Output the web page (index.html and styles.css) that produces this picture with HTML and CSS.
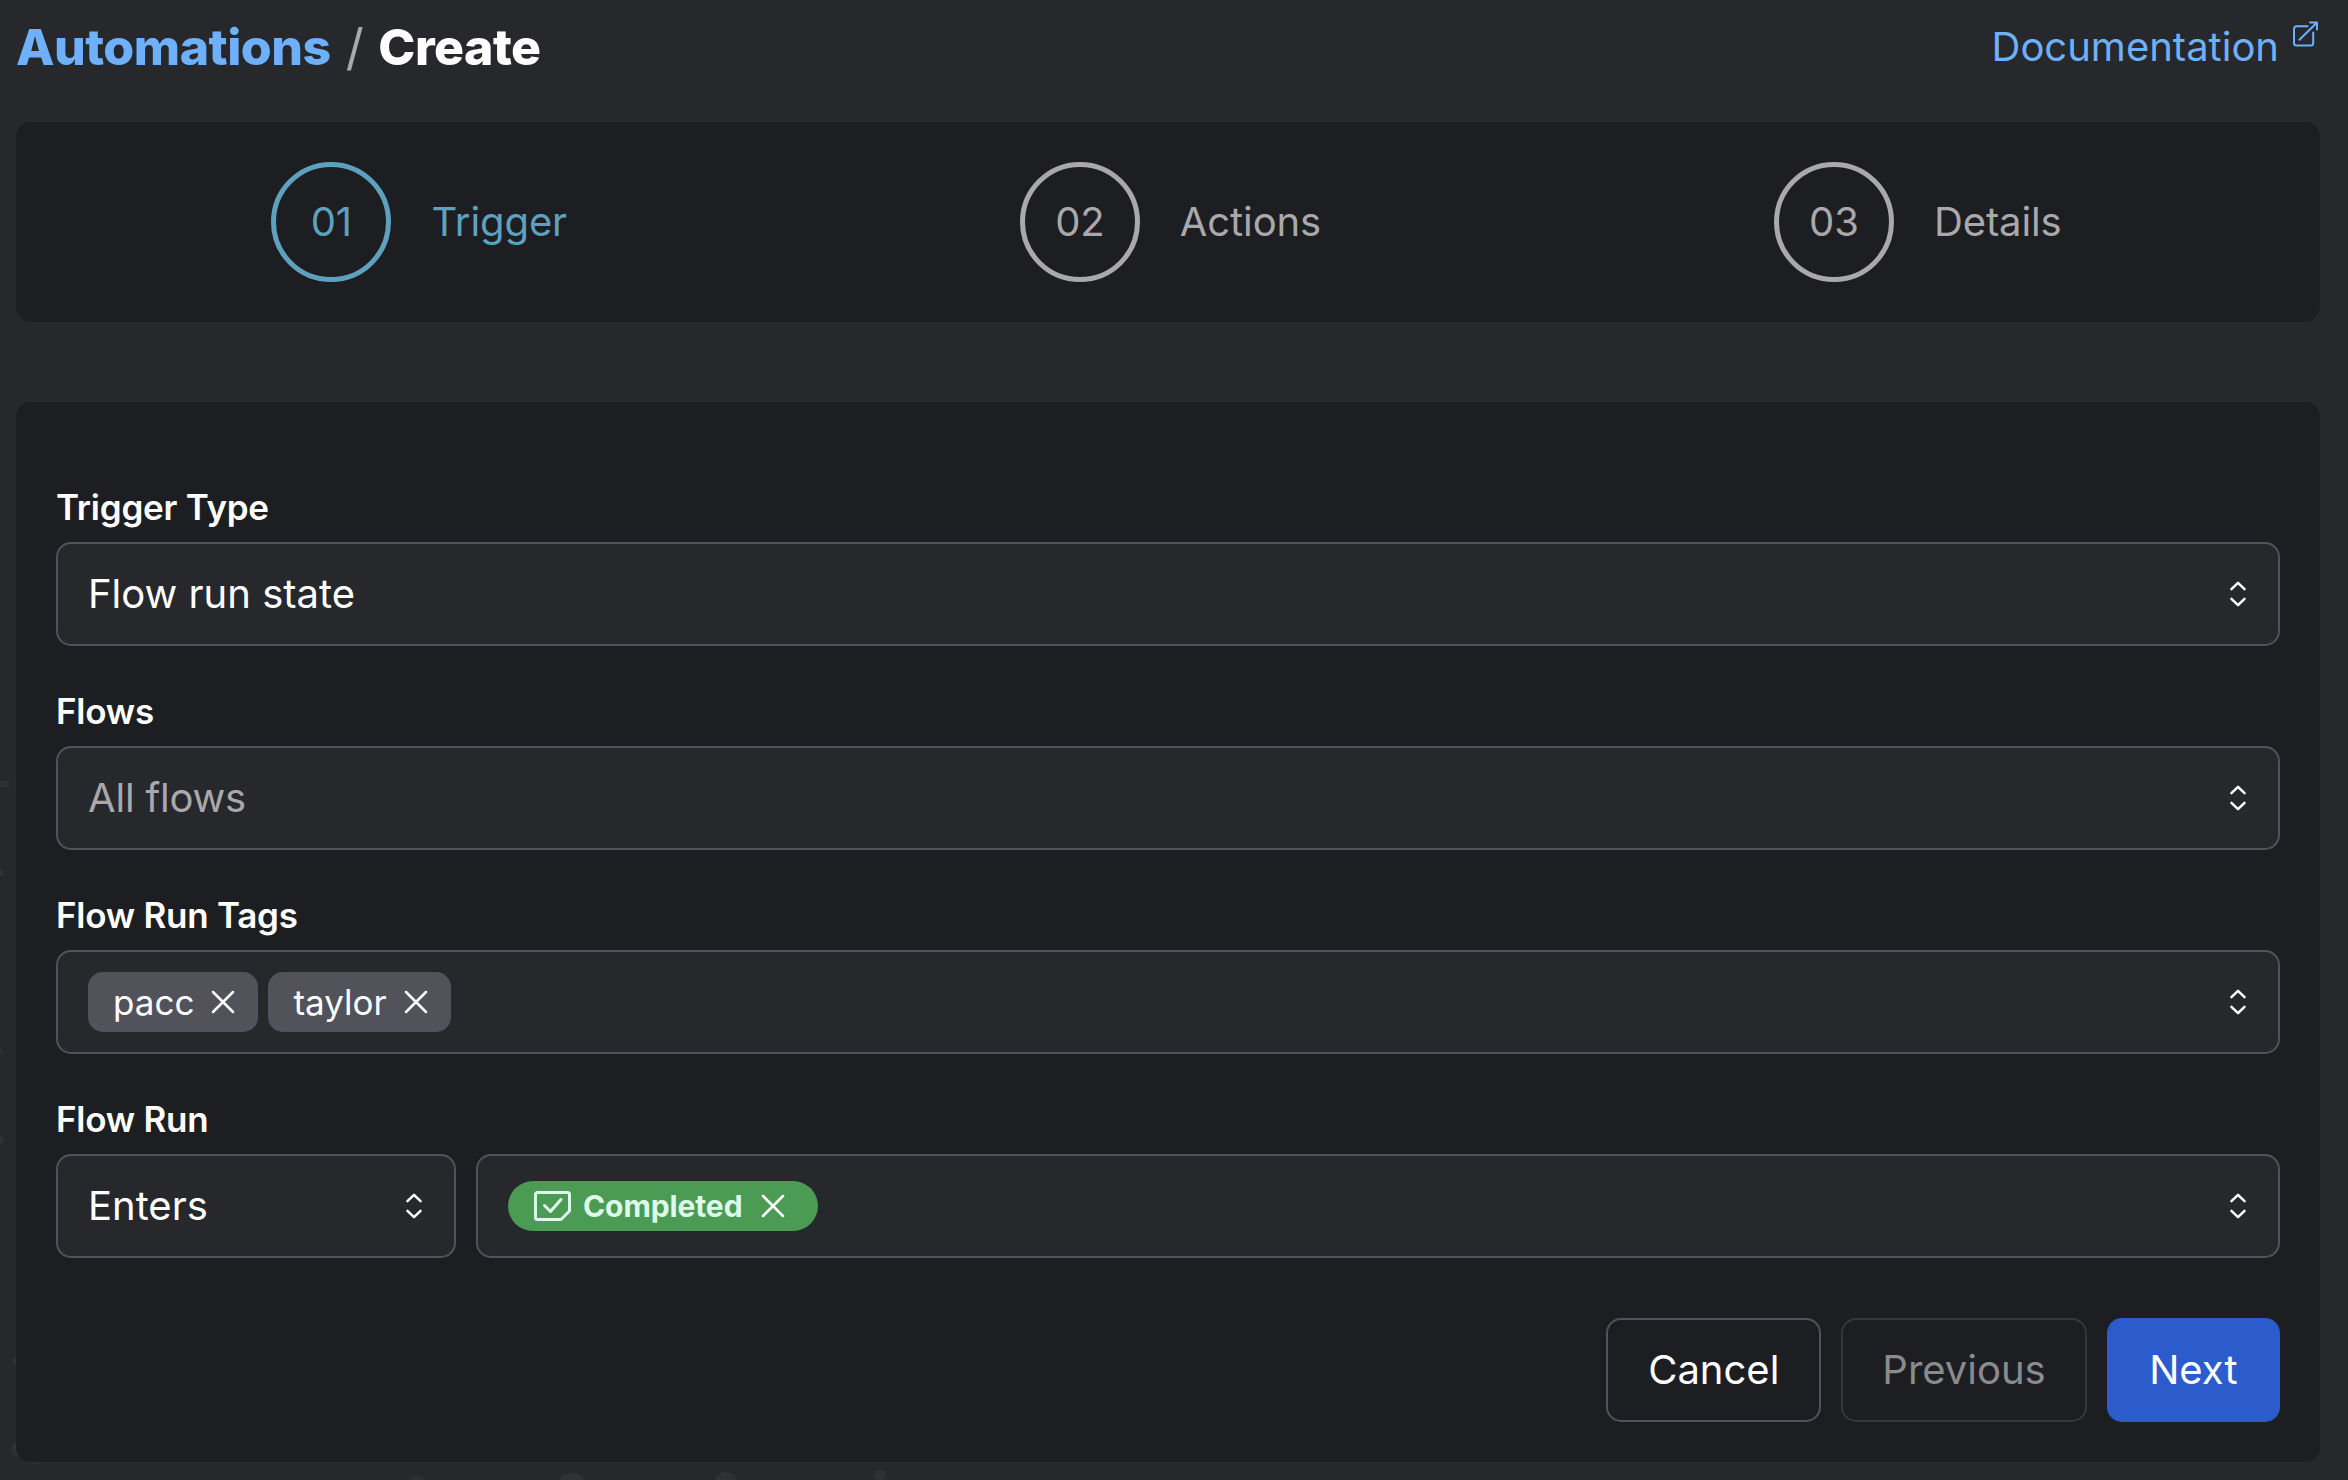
FILE: index.html
```html
<!DOCTYPE html>
<html lang="en">
<head>
<meta charset="utf-8">
<title>Automations / Create</title>
<link rel="stylesheet" href="styles.css">
</head>
<body>
<svg class="backdrop" viewBox="0 0 2348 1480" aria-hidden="true">
  <ellipse cx="4" cy="784" rx="5.5" ry="3.5"/><circle cx="0" cy="873" r="3.5"/><circle cx="-1" cy="1051" r="3"/><circle cx="-1" cy="1140" r="5"/>
  <circle cx="17" cy="1361" r="4"/><circle cx="18" cy="1449" r="7"/><circle cx="35" cy="1457" r="7"/>
  <circle cx="417" cy="1486" r="10"/><circle cx="572" cy="1489" r="16"/><circle cx="726" cy="1483" r="11"/><circle cx="880" cy="1475" r="5.5"/>
</svg>
<svg class="sprite" aria-hidden="true">
  <symbol id="updown" viewBox="0 0 16 26"><path d="M1.5 8.2 8 1.8l6.500 6.400M1.500 17.800 8 24.200l6.500-6.400"/></symbol>
  <symbol id="close" viewBox="0 0 24 24"><path d="M2 2l20 20M22 2 2 22"/></symbol>
</svg>
<main class="page">
  <header class="header">
    <nav class="crumbs"><a class="crumb-link">Automations</a><span class="slash">/</span><span>Create</span></nav>
    <a class="docs">Documentation
      <svg class="external" viewBox="0 0 26 26"><path d="M15.500 5.300H4.500A2.500 2.500 0 0 0 2 7.800V22a2.500 2.500 0 0 0 2.500 2.500h14.200a2.500 2.500 0 0 0 2.500-2.500V11.500M7.500 18.800 25 1.500M18 1.500h7v7"/></svg>
    </a>
  </header>

  <section class="card steps">
    <div class="step active"><span class="num">01</span><span>Trigger</span></div>
    <div class="step"><span class="num">02</span><span>Actions</span></div>
    <div class="step"><span class="num">03</span><span>Details</span></div>
  </section>

  <form class="card form">
    <div class="field">
      <label class="label">Trigger Type</label>
      <div class="select"><span>Flow run state</span><svg class="updown"><use href="#updown"/></svg></div>
    </div>
    <div class="field">
      <label class="label">Flows</label>
      <div class="select"><span class="placeholder">All flows</span><svg class="updown"><use href="#updown"/></svg></div>
    </div>
    <div class="field">
      <label class="label">Flow Run Tags</label>
      <div class="select">
        <div class="tags">
          <span class="tag">pacc<svg class="close"><use href="#close"/></svg></span>
          <span class="tag">taylor<svg class="close"><use href="#close"/></svg></span>
        </div>
        <svg class="updown"><use href="#updown"/></svg>
      </div>
    </div>
    <div class="field">
      <label class="label">Flow Run</label>
      <div class="row">
        <div class="select narrow"><span>Enters</span><svg class="updown"><use href="#updown"/></svg></div>
        <div class="select">
          <span class="state">
            <svg class="state-icon" viewBox="0 0 37 30"><path d="M3.500 1.500h30a2 2 0 0 1 2 2v16.500l-8.500 8.500H3.500a2 2 0 0 1-2-2v-23a2 2 0 0 1 2-2z"/><path d="M10.500 14.500l6 6L27 8.500"/></svg>
            <span class="state-name">Completed</span>
            <svg class="close"><use href="#close"/></svg>
          </span>
          <svg class="updown"><use href="#updown"/></svg>
        </div>
      </div>
    </div>
    <div class="actions">
      <button class="btn" type="button">Cancel</button>
      <button class="btn" type="button" disabled>Previous</button>
      <button class="btn primary" type="button">Next</button>
    </div>
  </form>
</main>
</body>
</html>
```
FILE: styles.css
```css
* { box-sizing: border-box; }
body {
  margin: 0;
  height: 1480px;
  overflow: hidden;
  background: #27282c;
  color: #fff;
  font: 400 40px/60px Inter, "Liberation Sans", sans-serif;
}
svg { fill: none; flex: none; stroke-linecap: round; stroke-linejoin: round; }
.sprite { position: absolute; width: 0; height: 0; }
.backdrop { position: absolute; left: 0; top: 0; width: 2348px; height: 1480px; z-index: -1; fill: #303135; }
.page { padding: 12px 28px 18px 16px; }
.header { display: flex; justify-content: space-between; height: 110px; }
.crumbs { display: flex; gap: 15px; height: 70px; font-size: 50px; line-height: 70px; font-weight: 800; letter-spacing: -0.5px; }
.crumb-link { color: #6eb0f9; }
.slash { color: #a9a9ab; font-weight: 400; }
.docs { display: flex; gap: 13px; padding-top: 5px; color: #6eb0f9; }
.external { width: 26px; height: 26px; margin: 4px 2px 0 0; stroke: currentColor; stroke-width: 2; }
.card { background: #1d1e21; border-radius: 15px; }
.steps { display: flex; justify-content: space-around; align-items: center; height: 200px; padding: 0 32px 0 29px; color: #a9a9ab; letter-spacing: -0.1px; }
.step { display: flex; align-items: center; gap: 40px; }
.step.active { color: #5ea1bf; }
.num { display: flex; align-items: center; justify-content: center; width: 120px; height: 120px; border: 5px solid; border-radius: 50%; }
.form { display: flex; flex-direction: column; gap: 40px; height: 1060px; margin-top: 80px; padding: 80px 40px 40px; }
.field { display: flex; flex-direction: column; gap: 10px; }
.label { font-size: 35px; line-height: 50px; font-weight: 560; letter-spacing: -0.25px; }
.row { display: flex; gap: 20px; }
.select {
  display: flex; flex: 1 0 auto; align-items: center; justify-content: space-between;
  height: 104px; padding: 0 32px 0 30px;
  background: #27282c; border: 2px solid #525359; border-radius: 15px;
}
.narrow { flex: 0 0 400px; }
.placeholder { color: #a9a9ab; letter-spacing: -0.2px; }
.updown { width: 16px; height: 26px; stroke: #fff; stroke-width: 2.5; }
.close { width: 24px; height: 24px; stroke: #fff; stroke-width: 2.5; }
.tags { display: flex; gap: 10px; }
.tag { display: flex; align-items: center; gap: 17px; height: 60px; padding: 0 23px 0 25px; border-radius: 15px; background: #52525b; font-size: 35px; }
.state { display: flex; align-items: center; height: 50px; padding: 0 33px 0 26px; border-radius: 25px; background: #4c9b54; color: #defaea; }
.state-icon { width: 37px; height: 30px; stroke: currentColor; stroke-width: 3; }
.state-name { margin: 0 19px 0 12px; font-size: 30px; font-weight: 650; letter-spacing: -0.1px; }
.actions { display: flex; justify-content: flex-end; gap: 20px; margin-top: 20px; }
.btn { height: 104px; padding: 0 40px; border: 2px solid #525359; border-radius: 15px; background: none; color: #fff; font: inherit; }
.btn:disabled { padding: 0 39px; border-color: #36373b; color: #8a8b8d; }
.primary { padding: 0 40.5px; border-color: #2c5ccc; background: #2c5ccc; }
```
